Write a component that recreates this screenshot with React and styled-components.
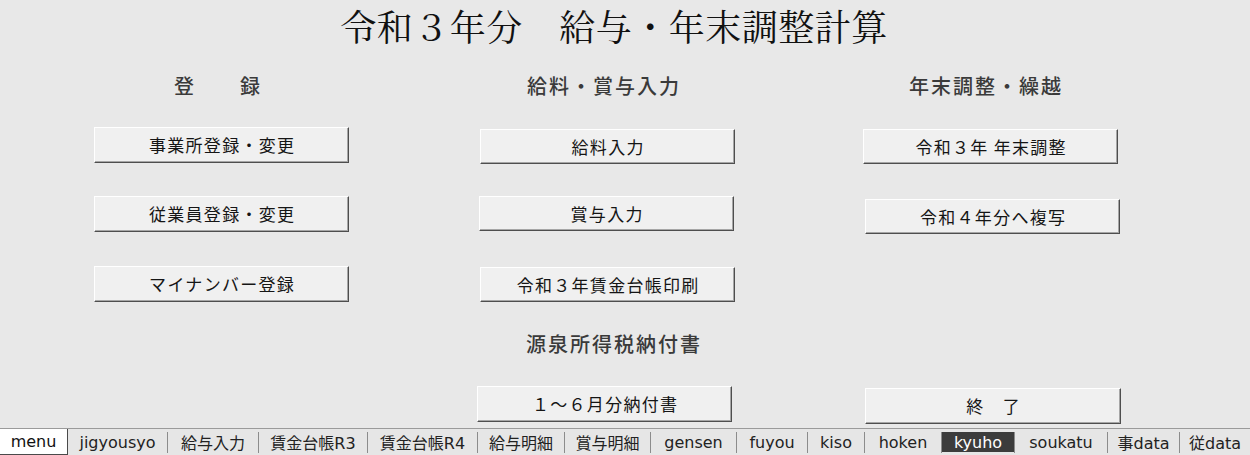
import React from 'react';
import styled, { createGlobalStyle } from 'styled-components';

const Global = createGlobalStyle`
  html, body { margin: 0; padding: 0; background: #e8e8e8; overflow: hidden; }
  body { font-family: "Noto Sans CJK JP", sans-serif; }
`;

const Screen = styled.div`
  width: 1250px;
  height: 455px;
  display: flex;
  flex-direction: column;
  background: #e8e8e8;
`;

const Sheet = styled.main`
  height: 428px;
  display: flex;
  flex-direction: column;
`;

const Title = styled.h1`
  margin: 0;
  padding: 2px 22px 0 0;
  font-family: "Noto Serif CJK JP", "Noto Sans CJK JP", serif;
  font-weight: 400;
  font-size: 36px;
  line-height: 48px;
  letter-spacing: 0.5px;
  color: #111;
  text-align: center;
`;

const Board = styled.div`
  margin-top: 20px;
  padding-left: 94px;
  display: grid;
  grid-template-columns: repeat(3, 256px);
  column-gap: 129px;
  grid-template-rows: 57px 69px 70px 64px 56px 36px;
`;

const Heading = styled.h2`
  grid-column: ${p => p.$col};
  grid-row: ${p => p.$row};
  align-self: start;
  margin: 0;
  font-size: 20px;
  line-height: ${p => p.$lh}px;
  font-weight: 500;
  color: #3a3a3a;
  letter-spacing: 2px;
  text-align: center;
  padding-left: ${p => (p.$shift > 0 ? p.$shift * 2 : 0)}px;
  padding-right: ${p => (p.$shift < 0 ? -p.$shift * 2 : 0)}px;
`;

const Key = styled.button`
  grid-column: ${p => p.$col};
  grid-row: ${p => p.$row};
  align-self: start;
  justify-self: start;
  box-sizing: border-box;
  width: ${p => p.$w || 255}px;
  height: ${p => p.$h || 36}px;
  margin: ${p => p.$dy || 0}px 0 0 ${p => p.$dx || 0}px;
  padding: 0 0 0 1.3px;
  background: #f0f0f0;
  border: 1px solid;
  border-color: #ffffff #4e4e4e #4e4e4e #ffffff;
  box-shadow: inset -1px -1px 0 #a6a6a6;
  font-family: "Noto Sans CJK JP", sans-serif;
  font-size: 17px;
  line-height: 20px;
  letter-spacing: 1.3px;
  color: #151515;
  cursor: default;
`;

const TabBar = styled.nav`
  height: 27px;
  box-sizing: border-box;
  border-top: 1px solid #9a9a9a;
  display: flex;
  align-items: stretch;
  background: #e6e6e6;
  font-family: "DejaVu Sans", "Noto Sans CJK JP", sans-serif;
  font-size: 16px;
  color: #222;
`;

const Tab = styled.div`
  box-sizing: border-box;
  flex: none;
  width: ${p => p.$w}px;
  display: flex;
  align-items: center;
  justify-content: center;
  white-space: nowrap;
  ${p => p.$active && `
    background: #ffffff;
    border-right: 1px solid #4a4a4a;
    border-bottom: 1px solid #4a4a4a;
    color: #111;
  `}
  ${p => p.$dark && `
    align-self: center;
    height: 20px;
    background: #3c3c3c;
    color: #ffffff;
  `}
`;

const Sep = styled.span`
  flex: none;
  width: 1px;
  height: 21px;
  align-self: center;
  margin-top: 1px;
  background: #8c8c8c;
`;

const tabs = [
  { name: 'menu', w: 68, active: true },
  { name: 'jigyousyo', w: 99 },
  { name: '給与入力', w: 90 },
  { name: '賃金台帳R3', w: 108 },
  { name: '賃金台帳R4', w: 109 },
  { name: '給与明細', w: 86 },
  { name: '賞与明細', w: 85 },
  { name: 'gensen', w: 85 },
  { name: 'fuyou', w: 70 },
  { name: 'kiso', w: 56 },
  { name: 'hoken', w: 76 },
  { name: 'kyuho', w: 72, dark: true },
  { name: 'soukatu', w: 92 },
  { name: '事data', w: 71 },
  { name: '従data', w: 70 },
];

export default function App() {
  return (
    <Screen>
      <Global />
      <Sheet>
        <Title>令和３年分　給与・年末調整計算</Title>
        <Board>
          <Heading $col={1} $row={1} $lh={32} $shift={-4}>登　　録</Heading>
          <Heading $col={2} $row={1} $lh={32} $shift={-3}>給料・賞与入力</Heading>
          <Heading $col={3} $row={1} $lh={32} $shift={-6}>年末調整・繰越</Heading>

          <Key $col={1} $row={2}>事業所登録・変更</Key>
          <Key $col={1} $row={3}>従業員登録・変更</Key>
          <Key $col={1} $row={4}>マイナンバー登録</Key>

          <Key $col={2} $row={2} $dx={1} $dy={2} $h={35}>給料入力</Key>
          <Key $col={2} $row={3} $h={35}>賞与入力</Key>
          <Key $col={2} $row={4} $dx={1} $dy={1} $h={35}>令和３年賃金台帳印刷</Key>
          <Heading $col={2} $row={5} $lh={28} $shift={7}>源泉所得税納付書</Heading>
          <Key $col={2} $row={6} $dx={-2}>１～６月分納付書</Key>

          <Key $col={3} $row={2} $dx={-1} $dy={2} $h={35}>令和３年 年末調整</Key>
          <Key $col={3} $row={3} $dx={1} $dy={3} $h={35}>令和４年分へ複写</Key>
          <Key $col={3} $row={6} $dx={1} $dy={2} $w={256}>終　了</Key>
        </Board>
      </Sheet>
      <TabBar>
        {tabs.map((t, i) => (
          <React.Fragment key={t.name}>
            {i > 1 && <Sep />}
            <Tab $w={t.w} $active={t.active} $dark={t.dark}>{t.name}</Tab>
          </React.Fragment>
        ))}
      </TabBar>
    </Screen>
  );
}
